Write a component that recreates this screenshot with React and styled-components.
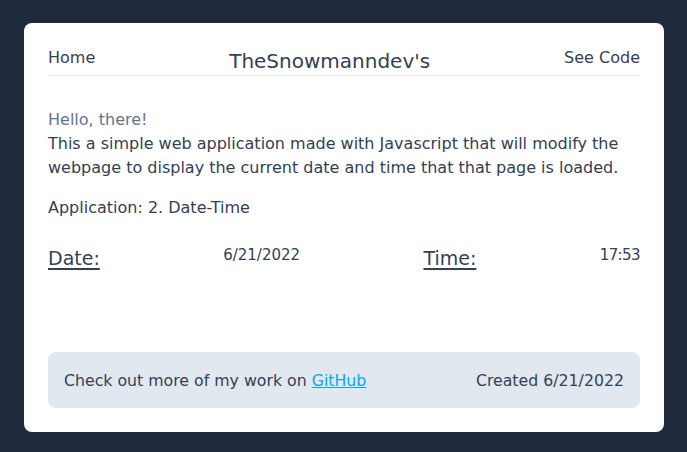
import React from 'react';
import styled, { createGlobalStyle } from 'styled-components';

const GlobalStyle = createGlobalStyle`
  html, body {
    margin: 0;
    padding: 0;
    background: #1e293b;
  }
  body {
    font-family: 'DejaVu Sans', 'Open Sans', sans-serif;
    color: #334155;
  }
`;

const PageStyled = styled.div`
  padding: 23px 23px 20px 24px;
`;

const CardStyled = styled.div`
  display: flex;
  flex-direction: column;
  box-sizing: border-box;
  height: 409px;
  background: #ffffff;
  border-radius: 8px;
  padding: 24px;
`;

const HeaderStyled = styled.header`
  display: flex;
  align-items: flex-start;
  justify-content: space-between;
  height: 28px;
  border-bottom: 1px solid #e5e7eb;
`;

const NavLinkStyled = styled.a`
  font-size: 16px;
  line-height: 22px;
  color: #334155;
  text-decoration: none;
`;

const TitleStyled = styled.h1`
  margin: 0;
  font-size: 20px;
  font-weight: 400;
  line-height: 28px;
  color: #334155;
`;

const IntroStyled = styled.section`
  margin-top: 32px;
  font-size: 16px;
  line-height: 24px;
`;

const GreetingStyled = styled.div`
  color: #64748b;
`;

const ParagraphStyled = styled.p`
  margin: 0;
`;

const AppNameStyled = styled.p`
  margin: 16px 0 0;
`;

const ReadingsStyled = styled.div`
  display: flex;
  justify-content: space-between;
  align-items: flex-start;
  margin-top: 23px;
`;

const LabelStyled = styled.span`
  font-size: 19px;
  line-height: 30px;
  text-decoration: underline;
  text-decoration-thickness: 2px;
  text-underline-offset: 3px;
`;

const ValueStyled = styled.span`
  font-size: 15px;
  line-height: 24px;
  letter-spacing: ${({ $tight }) => ($tight ? '-0.6px' : '0')};
`;

const FooterStyled = styled.footer`
  display: flex;
  align-items: center;
  justify-content: space-between;
  margin-top: auto;
  height: 56px;
  padding: 0 16px;
  background: #e2e8f0;
  border-radius: 8px;
  font-size: 15.75px;
`;

const GitHubLinkStyled = styled.a`
  color: #0ea5e9;
  text-decoration: underline;
`;

const App = () => (
  <>
    <GlobalStyle />
    <PageStyled>
      <CardStyled>
        <HeaderStyled>
          <NavLinkStyled href="#">Home</NavLinkStyled>
          <TitleStyled>TheSnowmanndev's</TitleStyled>
          <NavLinkStyled href="#">See Code</NavLinkStyled>
        </HeaderStyled>
        <IntroStyled>
          <GreetingStyled>Hello, there!</GreetingStyled>
          <ParagraphStyled>
            This a simple web application made with Javascript that will modify the
            webpage to display the current date and time that that page is loaded.
          </ParagraphStyled>
          <AppNameStyled>Application: 2. Date-Time</AppNameStyled>
        </IntroStyled>
        <ReadingsStyled>
          <LabelStyled>Date:</LabelStyled>
          <ValueStyled>6/21/2022</ValueStyled>
          <LabelStyled>Time:</LabelStyled>
          <ValueStyled $tight>17:53</ValueStyled>
        </ReadingsStyled>
        <FooterStyled>
          <span>
            Check out more of my work on <GitHubLinkStyled href="#">GitHub</GitHubLinkStyled>
          </span>
          <span>Created 6/21/2022</span>
        </FooterStyled>
      </CardStyled>
    </PageStyled>
  </>
);

export default App;
